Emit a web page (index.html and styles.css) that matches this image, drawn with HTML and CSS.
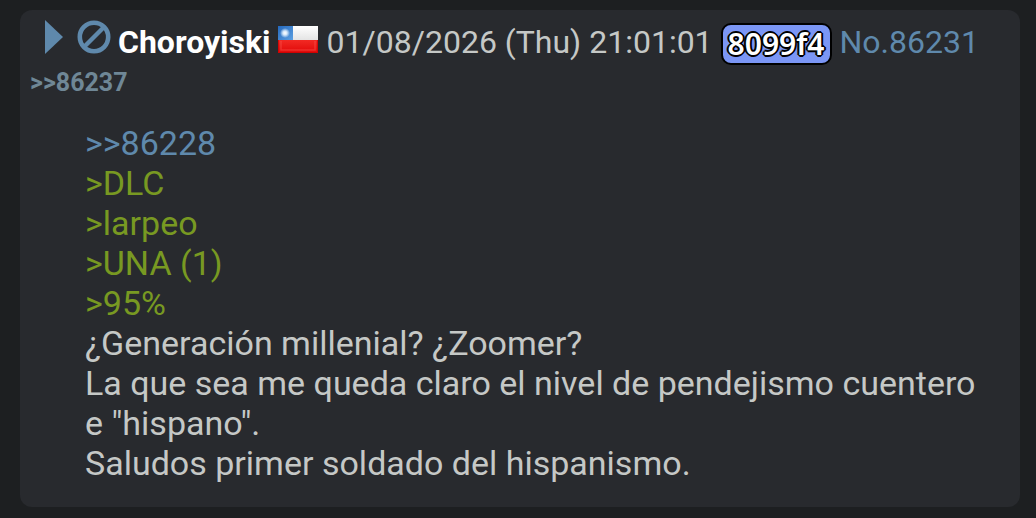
FILE: index.html
```html
<!DOCTYPE html>
<html lang="es">
<head>
<meta charset="utf-8">
<title>No.86231</title>
<link rel="stylesheet" href="styles.css">
</head>
<body>
<article class="post">
  <header class="intro">
    <button class="icon-button menu-button" type="button" aria-label="Menú">
      <svg class="arrow" viewBox="0 0 18 34"><path d="M0 0 18 17 0 34Z" fill="currentColor"/></svg>
    </button>
    <button class="icon-button hide-button" type="button" aria-label="Ocultar">
      <svg class="ban" viewBox="0 0 34 34"><circle cx="17" cy="17" r="14.2" fill="none" stroke="currentColor" stroke-width="4.6"/><path d="M7 27 27 7" stroke="currentColor" stroke-width="4.4"/></svg>
    </button>
    <span class="name">Choroyiski</span>
    <svg class="flag" viewBox="0 0 40 27" role="img" aria-label="Chile">
      <defs>
        <linearGradient id="white" x2="0" y2="1"><stop stop-color="#fff"/><stop offset="1" stop-color="#e4e4e4"/></linearGradient>
        <linearGradient id="red" x2="0" y2="1"><stop stop-color="#f22a24"/><stop offset="1" stop-color="#e00808"/></linearGradient>
        <linearGradient id="blue" x2="1" y2="1"><stop stop-color="#2468bd"/><stop offset="1" stop-color="#5da0e2"/></linearGradient>
        <radialGradient id="star"><stop stop-color="#fff"/><stop offset=".4" stop-color="#d5e8fa"/><stop offset="1" stop-color="#d5e8fa" stop-opacity="0"/></radialGradient>
      </defs>
      <path d="M0 0h40v14H0z" fill="url(#white)"/>
      <path d="M0 14h40v13H0z" fill="url(#red)"/>
      <path d="M0 0h15v14H0z" fill="url(#blue)"/>
      <circle cx="7" cy="7" r="5" fill="url(#star)"/>
      <path d="M3 15v9h34v-9" fill="none" stroke="#ff6a62" stroke-opacity=".35" stroke-width="1.5"/>
      <path d="M.5 14v12.5h39V14" fill="none" stroke="#c80000" stroke-opacity=".7"/>
    </svg>
    <time class="time" datetime="2026-01-08T21:01:01">01/08/2026 (Thu) 21:01:01</time>
    <span class="poster-id">8099f4</span>
    <a class="number" href="#86231">No.86231</a>
  </header>
  <div class="backlinks"><a href="#86237">&gt;&gt;86237</a></div>
  <div class="body">
    <a class="quote-link" href="#86228">&gt;&gt;86228</a><br>
    <span class="green">&gt;DLC</span><br>
    <span class="green">&gt;larpeo</span><br>
    <span class="green">&gt;UNA (1)</span><br>
    <span class="green">&gt;95%</span><br>
    ¿Generación millenial? ¿Zoomer?<br>
    La que sea me queda claro el nivel de pendejismo cuentero e "hispano".<br>
    Saludos primer soldado del hispanismo.
  </div>
</article>
</body>
</html>
```
FILE: styles.css
```css
body { margin: 0; padding: 10px 16px 11px 20px; background: #1d1f21; color: #c5c8c6; font-family: Roboto, sans-serif; font-size: 34px; line-height: 40px; }
a { color: #5f89ac; text-decoration: none; }
.post { background: #282a2e; border-radius: 12px; padding: 8px 10px 24px; }
.intro { display: flex; align-items: center; height: 48px; padding-left: 15px; font-size: 32px; white-space: nowrap; }
.intro > * { flex-shrink: 0; }
.icon-button { display: block; padding: 0; border: 0; background: none; color: #5f89ac; }
.icon-button svg { display: block; }
.menu-button { margin: 0 14px 10px 0; }
.hide-button { margin: 0 7px 10px 0; }
.arrow { width: 18px; height: 34px; }
.ban { width: 34px; height: 34px; }
.name { color: #fff; font-weight: 700; }
.flag { width: 40px; height: 27px; margin: 0 9px 5px 7px; }
.poster-id { margin: 4px 8px 0; padding: 0 5px; border: 2px solid #000; border-radius: 10px; background: #7b96f5; color: #fff; font: 600 30px/38px "Noto Sans", sans-serif; text-shadow: 2px 0 #000, -2px 0 #000, 0 2px #000, 0 -2px #000, 1px 1px #000, -1px 1px #000, 1px -1px #000, -1px -1px #000; }
.backlinks { padding-top: 1px; font-size: 25px; font-weight: 700; line-height: 32px; }
.backlinks a { color: #6f8796; }
.body { padding: 24px 25px 0 55px; }
.green { color: #789922; }
```
